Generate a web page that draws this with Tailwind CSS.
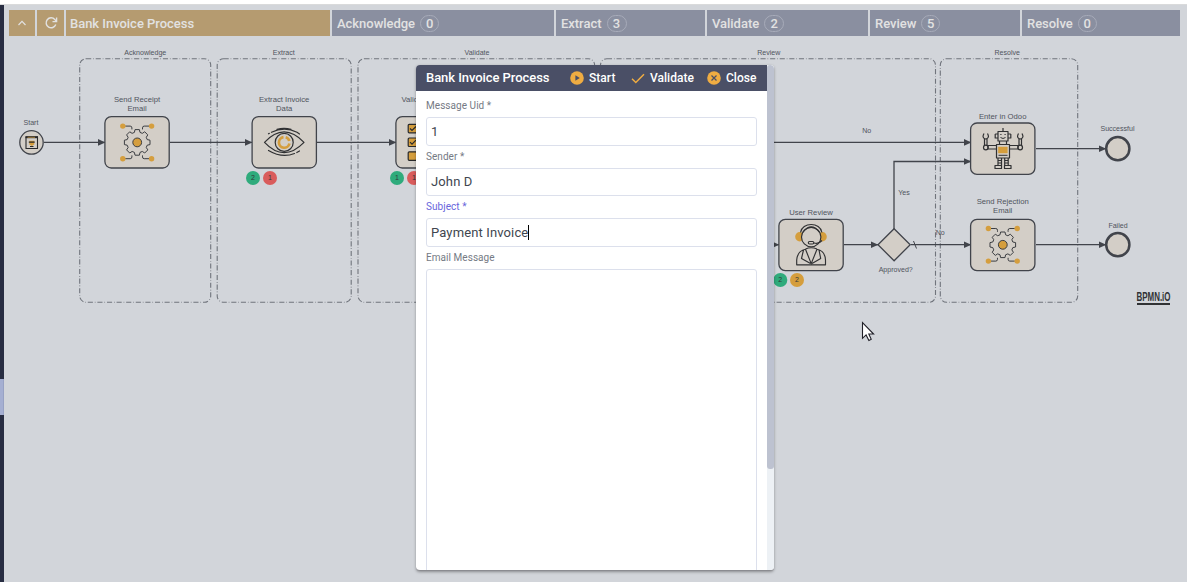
<!DOCTYPE html>
<html lang="en">
<head>
<meta charset="utf-8">
<title>Bank Invoice Process</title>
<script src="https://cdn.jsdelivr.net/npm/@tailwindcss/browser@4"></script>
</head>
<body class="w-[1187px] h-[582px] overflow-hidden bg-[#d2d5da] font-[Roboto,sans-serif] relative flex flex-col">
<div class="h-1 shrink-0 bg-white"></div>
<div class="flex flex-1 min-h-0 border-t border-[#d9dadb]">
  <aside class="w-1 shrink-0 bg-[#282d42] pt-[374px]"><div class="h-9 bg-[#a5afd2] border-r border-[#98a2c4]"></div></aside>
  <main class="flex-1 min-w-0 flex flex-col pt-[5px]">
    <nav class="flex gap-0.5 h-[26px] pl-[5px] shrink-0 text-[13px] tracking-[-.03px] font-medium text-[#e2e2e2]">
      <button class="w-[26px] bg-[#b59b70] flex items-center justify-center"><svg width="10" height="8" viewBox="0 0 10 8" fill="none" stroke="#e2e2e2" stroke-width="1.2"><path d="M1.5 6 5 2.4 8.5 6"/></svg></button>
      <button class="w-[27px] bg-[#b59b70] flex items-center justify-center"><svg width="14" height="14" viewBox="0 0 14 14" fill="none" stroke="#e2e2e2" stroke-width="1.4"><path d="M11.8 8.6A5 5 0 1 1 10.8 3.4L12 5"/><path d="M12.6 1.5V5.6H8.5"/></svg></button>
      <div class="w-[264px] bg-[#b59b70] flex items-center pl-1 pt-px">Bank Invoice Process</div>
      <div class="w-[222px] bg-[#8a8fa0] flex items-center pl-[5px] pt-px gap-[5px]">Acknowledge<span class="w-[19px] h-[17px] rounded-full border border-[#a7abb9] flex items-center justify-center">0</span></div>
      <div class="w-[149px] bg-[#8a8fa0] flex items-center pl-[5px] pt-px gap-[5px]">Extract<span class="w-5 h-[17px] rounded-full border border-[#a7abb9] flex items-center justify-center">3</span></div>
      <div class="w-[161px] bg-[#8a8fa0] flex items-center pl-[5px] pt-px gap-[5px]">Validate<span class="w-5 h-[17px] rounded-full border border-[#a7abb9] flex items-center justify-center">2</span></div>
      <div class="w-[150px] bg-[#8a8fa0] flex items-center pl-[5px] pt-px gap-[5px]">Review<span class="w-[19px] h-[17px] rounded-full border border-[#a7abb9] flex items-center justify-center">5</span></div>
      <div class="w-[158px] bg-[#8a8fa0] flex items-center pl-[5px] pt-px gap-[5px]">Resolve<span class="w-[19px] h-[17px] rounded-full border border-[#a7abb9] flex items-center justify-center">0</span></div>
    </nav>
    <svg class="block shrink-0 font-['Liberation_Sans',Arial,sans-serif]" width="1183" height="546" viewBox="4 36 1183 546" fill="none">
      <defs>
        <marker id="arrow" viewBox="0 0 8 8" refX="7.5" refY="4" markerWidth="8" markerHeight="8" markerUnits="userSpaceOnUse" orient="auto"><path d="M.5 .7 7.8 4 .5 7.3Z" fill="#41444b"/></marker>
        <g id="gear">
          <path d="M-2.8-10L-2.2-12.8H2.2L2.8-10L5.1-9.05L7.5-10.6L10.6-7.5L9.05-5.1L10-2.8L12.8-2.2V2.2L10 2.8L9.05 5.1L10.6 7.5L7.5 10.6L5.1 9.05L2.8 10L2.2 12.8H-2.2L-2.8 10L-5.1 9.05L-7.5 10.6L-10.6 7.5L-9.05 5.1L-10 2.8L-12.8 2.2V-2.2L-10-2.8L-9.05-5.1L-10.6-7.5L-7.5-10.6L-5.1-9.05Z" stroke="#3b3d41" stroke-width="1" stroke-linejoin="round"/>
          <path d="M-12-16.3H-7Q-5.3-16.3-5.3-14.5V-13M12-16.3H7Q5.3-16.3 5.3-14.5V-13M-12 16.3H-7Q-5.3 16.3-5.3 14.5V13M12 16.3H7Q5.3 16.3 5.3 14.5V13" stroke="#3b3d41"/>
          <g fill="#d59e3d"><circle cx="-14.4" cy="-16.3" r="2.7"/><circle cx="14.4" cy="-16.3" r="2.7"/><circle cx="-14.4" cy="16.3" r="2.7"/><circle cx="14.4" cy="16.3" r="2.7"/><circle r="4.4" stroke="#3b3d41"/></g>
        </g>
      </defs>
      <g stroke="#70747c" stroke-width="1.1" stroke-dasharray="5.12 1.92 .64 1.92">
        <rect x="79.7" y="58.7" width="131" height="243.6" rx="6.4"/><rect x="217.2" y="58.7" width="134" height="243.6" rx="6.4"/><rect x="358" y="58.7" width="236.6" height="243.6" rx="6.4"/><rect x="600.5" y="58.7" width="335" height="243.6" rx="6.4"/><rect x="940.3" y="58.7" width="137.4" height="243.6" rx="6.4"/>
      </g>
      <g stroke="#41444b" stroke-width="1.3">
        <g marker-end="url(#arrow)"><path d="M44 142.4H105"/><path d="M170 142.4H252"/><path d="M317 142.4H396"/><path d="M700 142.4H971"/><path d="M740 244.7H779"/><path d="M844 244.7H878"/><path d="M894 229V161.5H971"/><path d="M911 244.7H971"/><path d="M1036 148.7H1106"/><path d="M1036 244.7H1106"/></g>
        <path d="M913.5 241 916.5 248.5" stroke-width="1"/>
        <g fill="#d3cec7"><rect x="104.9" y="116.6" width="64.3" height="51.4" rx="6.4"/><rect x="252.1" y="116.6" width="64.3" height="51.4" rx="6.4"/><rect x="395.9" y="116.6" width="64.3" height="51.4" rx="6.4"/><rect x="778.9" y="219.3" width="64.3" height="51.4" rx="6.4"/><rect x="970.6" y="123" width="64.3" height="51.4" rx="6.4"/><rect x="970.6" y="219.3" width="64.3" height="51.4" rx="6.4"/><path d="M894.1 228.7 910.2 244.7 894.1 260.8 878 244.7Z"/><circle cx="31.5" cy="142.4" r="11.7"/><g stroke-width="2.5"><circle cx="1117.8" cy="148.7" r="11.6"/><circle cx="1117.8" cy="244.7" r="11.6"/></g></g>
      </g>
      <!-- start event: browser window with a form -->
      <g><path d="M26 137H37.500V148.500H26Z" stroke="#28292b" stroke-width="1.1"/><path d="M25.500 137.200H38" stroke="#28292b" stroke-width="2"/><path d="M27.500 137.300H35" stroke="#d59e3d" stroke-width=".7"/><path d="M29.300 140.700H34.300V144.500L31.800 146 29.300 144.500Z" fill="#d59e3d"/><path d="M28.800 142.200H34.700M30 146.500H33.500" stroke="#28292b" stroke-width="1.200"/></g>
      <use href="#gear" x="137.2" y="142.4"/>
      <use href="#gear" x="1002.8" y="244.8"/>
      <!-- eye -->
      <g stroke="#303133" stroke-width="1.2" stroke-linecap="round"><path d="M264.5 142.4Q284 121.5 304 142.4Q284 163 264.5 142.4Z" stroke-linejoin="round"/><circle cx="284.2" cy="142.4" r="9"/><path d="M268.500 133.800 269.300 133.400M271.500 132.300Q284.500 126 297 132.300L299.500 134M268.500 150.500Q282 158.500 294.500 153.500M296.800 152.500 299.500 151M277 129.300Q284 127.300 291 129.300"/></g>
      <path d="M283.500 137.200A5.300 5.300 0 1 0 289.400 143.500M285.700 137.200A5.300 5.300 0 0 1 289.300 141" stroke="#d59e3d" stroke-width="2.7"/>
      <!-- checklist -->
      <g stroke="#28292b" stroke-width="1.2" fill="#d59e3d"><rect x="408.2" y="124.3" width="8.5" height="8.5" rx="1"/><rect x="408.2" y="138" width="8.5" height="8.5" rx="1"/><rect x="408.2" y="151.8" width="8.5" height="8.5" rx="1"/><path d="M410 128.5 412 130.5 416 126.5M410 142.2 412 144.2 416 140.2" fill="none"/></g>
      <!-- agent with headset -->
      <g stroke="#303133" stroke-width="1.15" stroke-linejoin="round"><g fill="#d59e3d" stroke="none"><ellipse cx="799.6" cy="236.8" rx="4.400" ry="4.700"/><ellipse cx="822.400" cy="236.800" rx="4.400" ry="4.700"/></g><circle cx="811.2" cy="237" r="9.700" fill="#d3cec7"/><path d="M800.500 232.500C802 221.800 820.400 221.800 821.900 232.500M802.800 232.300Q811.200 221.500 819.600 232.300M822 240.500Q818.500 244.500 814 243"/><rect x="808.3" y="241.500" width="5.5" height="2.500" rx="1.200"/><path d="M796.700 264.800V260Q797.500 250.800 805.500 249.300L811.200 263.600 817 249.300Q825 250.800 825.500 260V264.800ZM803.500 250 801.500 258.500 810.500 263.600M819 250 820.700 258.500 812 263.600M805.500 249Q811.200 246.500 817 249"/></g>
      <!-- robot -->
      <g stroke="#303133" stroke-width="1.2" stroke-linejoin="round"><path d="M1003 128V131.5M998 131.5H1008V141H998ZM995.2 134V138H998M995.2 134H998M1010.8 134V138H1008M1010.8 134H1008M999.5 141H1006.5V144.5H999.5ZM996.5 144.5H1009.500V158H996.500ZM996.500 145.500H988V149H996.500M1009.500 145.500H1018V149H1009.500M998 158V166M1001.500 158V166M1004.700 158V166M1008.200 158V166M995 168.500V165.500H1001.500V168.500ZM1004.500 168.500V165.500H1011V168.500ZM997.500 160.500H1001.500M997.500 163H1001.500M1004.500 160.500H1008.500M1004.500 163H1008.500"/><path d="M984.500 139V146M987 139V146M1019 139V146M1021.500 139V146M984 133.500Q981.500 138 985.700 139Q990 138 987.500 133.500M1018.500 133.500Q1016 138 1020.200 139Q1024.500 138 1022 133.500"/><circle cx="985.800" cy="147.500" r="2.300"/><circle cx="1020.200" cy="147.500" r="2.300"/><path d="M1000.300 134.500H1001.500M1004.500 134.500H1005.700M1000.500 137.500Q1003 139.500 1005.500 137.500M998.500 155.300H1007.500" stroke-width="1"/><rect x="998.300" y="147" width="9" height="6" fill="#d59e3d" stroke="#d59e3d" stroke-width=".5"/></g>
      <g fill="#2fab7c"><circle cx="253" cy="178" r="7"/><circle cx="397" cy="178" r="7"/><circle cx="780.3" cy="280" r="7"/></g>
      <g fill="#d95c5c"><circle cx="270" cy="178" r="7"/><circle cx="414" cy="178" r="7"/></g><circle cx="797" cy="280" r="7" fill="#d59e3d"/>
      <g fill="#33383b" font-size="7" text-anchor="middle"><text x="253" y="180.3">2</text><text x="270" y="180.3">1</text><text x="397" y="180.3">1</text><text x="414" y="180.3">1</text><text x="780.3" y="282.3">2</text><text x="797" y="282.3">2</text></g>
      <g fill="#50545d" font-size="7.06" text-anchor="middle">
        <text x="145.3" y="55">Acknowledge</text><text x="283.7" y="55">Extract</text><text x="477" y="55">Validate</text><text x="768.8" y="55">Review</text><text x="1007.2" y="55">Resolve</text>
        <text x="31" y="125">Start</text><text x="866.7" y="133">No</text><text x="904" y="195">Yes</text><text x="940.3" y="235.3">No</text><text x="895.7" y="272">Approved?</text><text x="1117.5" y="131">Successful</text><text x="1118" y="228">Failed</text>
      </g>
      <g fill="#50545d" font-size="7.7" text-anchor="middle">
        <text x="137" y="102">Send Receipt</text><text x="137" y="111">Email</text><text x="284.2" y="102">Extract Invoice</text><text x="284.2" y="111">Data</text><text x="401.5" y="102" text-anchor="start">Validate</text><text x="811" y="215">User Review</text><text x="1002.7" y="119">Enter in Odoo</text><text x="1002.7" y="204">Send Rejection</text><text x="1002.7" y="213">Email</text>
      </g>
      <text x="1136.5" y="301" textLength="34" lengthAdjust="spacingAndGlyphs" font-size="13" font-weight="700" fill="#303234">BPMN.iO</text>
      <path d="M1137 303.9H1170" stroke="#303234" stroke-width="2"/>
    </svg>
  </main>
</div>
<section class="absolute left-[416px] top-[65px] w-[358px] h-[506px] rounded-[4px] overflow-hidden bg-white flex shadow-[0_1px_3px_rgba(0,0,0,.35)] border-b border-[#8b8c91]">
  <div class="w-[351px] flex flex-col">
    <header class="h-[26px] shrink-0 bg-[#4a4f66] text-white font-medium flex items-center pl-2.5 text-[13px]">
      <h1 class="w-[144px] whitespace-nowrap tracking-[-.06px]">Bank Invoice Process</h1>
      <button class="flex items-center gap-[5px] w-[61px] text-[12px] tracking-[.03px]"><svg width="14" height="14" viewBox="0 0 14 14"><circle cx="7" cy="7" r="6.8" fill="#efac42"/><path d="M5.4 4.2 9.8 7 5.4 9.8Z" fill="#4a4f66"/></svg>Start</button>
      <button class="flex items-center gap-[5px] w-[76px] text-[12px] tracking-[.03px]"><svg width="14" height="14" viewBox="0 0 14 14" fill="none"><path d="M1 7.8 4.8 11.5 13 3.3" stroke="#efac42" stroke-width="1.5"/></svg>Validate</button>
      <button class="flex items-center gap-[5px] text-[12px] tracking-[.03px]"><svg width="14" height="14" viewBox="0 0 14 14"><circle cx="7" cy="7" r="6.8" fill="#efac42"/><path d="M4.5 4.5 9.5 9.5M9.5 4.5 4.5 9.5" stroke="#4a4f66" stroke-width="1.2"/></svg>Close</button>
    </header>
    <form class="px-2.5 pt-2 flex flex-col text-[13px] tracking-[.13px] text-[#41464f]">
      <label class="h-[18px] leading-[14px] text-[10px] tracking-[.05px] text-[#757a84]">Message Uid *</label>
      <div class="h-[29px] border border-[#dce0ec] rounded-[3px] flex items-center pl-1 mb-1">1</div>
      <label class="h-[18px] leading-[14px] text-[10px] tracking-[.05px] text-[#757a84]">Sender *</label>
      <div class="h-[28px] border border-[#dce0ec] rounded-[3px] flex items-center pl-1 mb-1">John D</div>
      <label class="h-[18px] leading-[14px] text-[10px] tracking-[.05px] text-[#6866dc]">Subject *</label>
      <div class="h-[29px] border border-[#dce0ec] rounded-[3px] flex items-center pl-1 mb-1"><span>Payment Invoice</span><i class="w-px h-[15px] bg-black"></i></div>
      <label class="h-[18px] leading-[14px] text-[10px] tracking-[.05px] text-[#757a84]">Email Message</label>
      <div class="h-[320px] shrink-0 border border-[#dce0ec] rounded-[3px]"></div>
    </form>
  </div>
  <div class="w-[7px] bg-[#edf1f5]"><div class="h-[404px] bg-[#bdc2d0] rounded-[3px]"></div></div>
</section>
<svg class="absolute left-[861px] top-[321px]" width="14" height="22" viewBox="0 0 14 22"><path d="M1.5 1.5V17.3L5.1 13.9 7.9 19.4 10.2 18.3 7.8 13H12.6Z" fill="#fff" stroke="#202028" stroke-width="1.1"/></svg>
</body>
</html>
